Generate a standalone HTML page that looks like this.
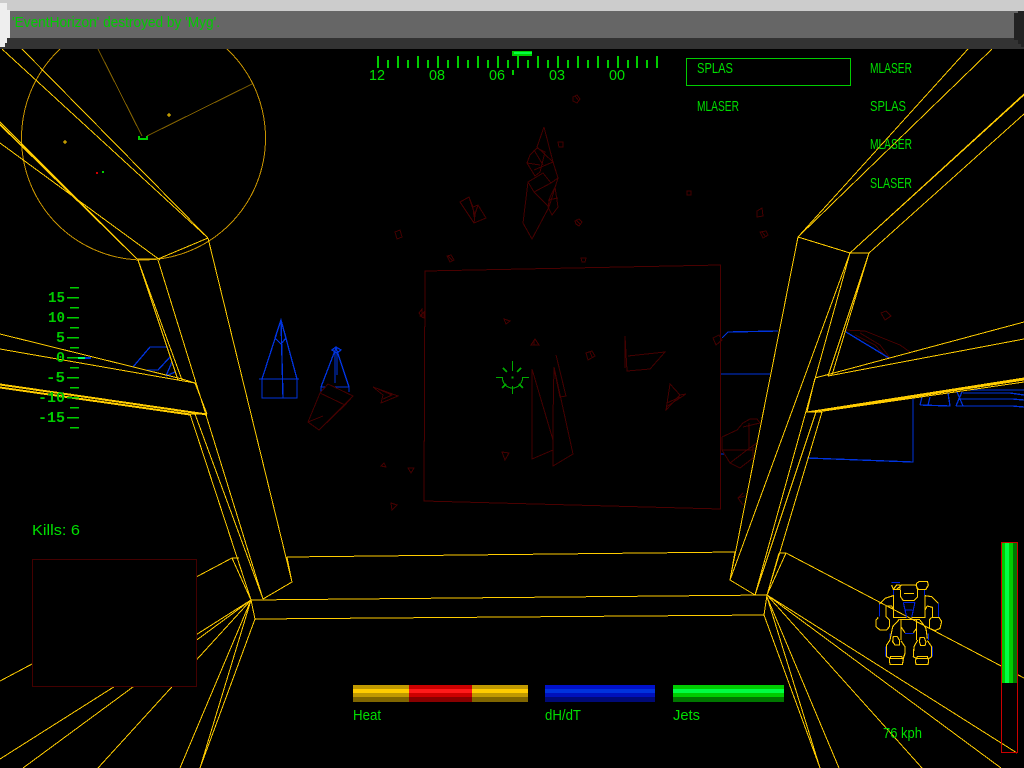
<!DOCTYPE html>
<html><head><meta charset="utf-8"><style>
html,body{margin:0;padding:0;background:#000;width:1024px;height:768px;overflow:hidden}
svg{display:block;position:absolute;left:0;top:0}
text{font-family:"Liberation Sans",sans-serif;font-size:15px;fill:#00e000}
.n{font-family:"Liberation Mono",monospace;font-weight:bold;font-size:15px;fill:#00cc00}
</style></head><body>
<svg width="1024" height="768" viewBox="0 0 1024 768" fill="none">
<rect width="1024" height="768" fill="#000"/>
<!-- blue -->
<g stroke="#0033dd" stroke-width="1.3" shape-rendering="crispEdges">
<path d="M281 320L262 379V398H297V379ZM259 379H299M281 320L283 398M262 379H297M275 338L281 320L286 338L281 344Z"/>
<path d="M336 348L321 387M336 348L349 387M321 387H349M321 387V392M349 387V392M332 350L336 347L341 350L337 353ZM335 350V383M337 350V375"/>
<path d="M133 367L150 347H167M147 370H158L170 357M166 376L175 372M172 362L166 376"/>
<path d="M722 338L728 332L778 331M721 374H770M721 454H724M807 458L913 462V398"/>
<path d="M920 405L950 406L948 393M922 397L920 405M930 397L928 405M957 392L963 406M962 392L956 406M963 393H1010L1024 395M958 399H1012L1024 400M956 406H1012L1024 407M970 390H1024"/>
</g>
<!-- red wreckage -->
<g stroke="#440000" stroke-width="1" shape-rendering="crispEdges">
<path d="M425 271L720.7 265V509L424 501Z" stroke="#4a0000"/>
<path d="M544 127L537 147M544 127L553 162L558 178L551 183L543 173L528 182L523 223L532 239L549 207L534 192L528 182M534 192L551 183M549 207L558 178M523 223L528 182M537 147L553 162L534 170M530 155L537 148L545 152L540 172L535 176L527 163ZM527 163L540 165M534 150L543 165M555 187L558 207L552 215L548 207L550 197ZM548 200L558 198"/>
<path d="M460 202L469 197L473 207L478 205L486 218L474 223ZM469 197L475 215L474 223M473 207L474 217L478 205"/>
<path d="M532 369L553 440V450L532 459ZM554 367L573 454L553 466V417ZM556 355L566 396L560 397L555 373M625 336L627 371L650 369L665 352L628 356M625 336V368M670 384L680 395L666 410ZM686 394L666 407M680 395L686 394M667 403L680 397"/>
<path d="M373 387L398 396L381 403L383 395ZM378 389L392 395L383 399"/>
<path d="M328 384L353 396L319 430L308 422L320 393ZM320 393L345 405L319 430M328 384L320 393M353 396L345 405M323 416L308 422" fill="#000"/>
<path d="M573 97L577 95L580 99L577 103L573 101ZM575 96L579 101M558 142L563 142L563 147L559 147ZM575 221L579 219L582 222L579 226L576 224ZM576 220L581 225M581 258L586 258L585 262L582 262ZM395 232L400 230L402 237L397 239ZM447 256L451 255L454 260L450 262ZM448 256L453 261M687 191L691 191L691 195L687 195ZM757 211L762 208L763 216L757 217ZM760 232L766 231L768 235L763 238ZM762 232L766 237M381 466L384 463L386 467ZM408 468L414 468L411 473ZM391 503L397 505L392 510ZM419 313L422 309V317ZM424 312V318L420 316ZM504 319L510 321L506 324ZM531 345L535 339L539 345ZM534 341V345M586 353L592 351L595 356L588 360ZM590 352L592 357M713 338L719 335L722 340L716 345ZM502 452L509 453L505 460ZM881 313L886 311L891 316L885 320Z"/>
<path d="M722 437L737 430L743 423L750 419H757L760 423L743 427M749 423V450M722 437V450H753M722 450L730 463L740 468L753 458V447M730 463L747 450L757 443M743 493L738 498L743 505M738 498L745 496"/>
<path d="M845 330L865 331L900 345L910 352M860 333L880 345L890 358M855 335L875 345L887 358"/>
</g>
<path d="M846 332L889 358" stroke="#0033dd" stroke-width="1.3" shape-rendering="crispEdges"/>
<!-- radar -->
<g shape-rendering="crispEdges">
<circle cx="143.5" cy="138" r="122" stroke="#c89400" stroke-width="1"/>
<path d="M142 136L98 49M147 136L252 84" stroke="#806000" stroke-width="1"/>
<path d="M139 136V139H147V136" stroke="#00cc00" stroke-width="2"/>
<path d="M167 115H171M169 113V117M63 142H67M65 140V144" stroke="#ffcc00"/>
</g>
<rect x="96" y="172" width="2" height="2" fill="#cc0000"/><rect x="102" y="171" width="2" height="2" fill="#00cc00"/>
<!-- cockpit frame -->
<g stroke="#ffcc00" stroke-width="1" shape-rendering="crispEdges">
<path d="M2 49L208 238M22 49L208 238M0 122L137 259M0 125L137 259M0 124L137 259M0 143L160 260M137 259H158L208 238"/>
<path d="M138 260L178 380M138 260L182 380M158 260L263 599M208 238L292 582L263 599M190 414L251 600M195 414L263 599"/>
<path d="M0 334L182 379L195 383L207 414M0 349L195 383M0 384L207 414M0 387L190 414M0 388L190 415M0 385L207 415M190 414H207"/>
<path d="M287 557L735 552M251 600L767 595M255 619L764 615M251 600L255 619M767 595L764 615M287 557L292 582M735 552L730 580L755 595"/>
<path d="M239 558H232L0 681M232 558L251 600M251 600L0 759M251 600L23 768M251 600L98 768M251 600L180 768M251 600L200 768M255 619L200 768"/>
<path d="M798 237L968 49M798 237L992 49M798 237L850 253H869M850 253L1024 94M850 253L1024 95M869 253L1024 114"/>
<path d="M798 237L730 580M850 253L730 580M850 253L755 595M869 253L828 376M869 253L832 375M816 412L755 595M822 412L767 595M815 378L807 412H822"/>
<path d="M815 378L1024 322M828 376L1024 339M807 412L1024 378M817 412L1024 382M822 411L1024 380M810 412L1024 379"/>
<path d="M779 553H786L767 595M779 553L767 595M786 553L1024 678M767 595L1017 753M767 595L1001 768M767 595L922 768M767 597L839 768M767 597L820 768M764 615L820 768"/>
</g>
<!-- bottom-left box -->
<rect x="32.5" y="559.5" width="164" height="127" fill="#000" stroke="#440000" shape-rendering="crispEdges"/>
<!-- mech -->
<g transform="translate(840 530) scale(.3333)" stroke-width="3.4" shape-rendering="crispEdges">
<path stroke="#0022dd" d="M155 157H180M190 217H225M190 217L200 262M225 217L215 262M197 240H218M118 222V260M295 220V262M137 350V380M277 350V380M150 310V330M265 310V330M195 310H220M160 178V197M253 178V197"/>
<path stroke="#ffcc00" d="M155 165L160 178H180V165H170L160 178M230 160L238 154H262L265 165L258 178H235L230 170ZM170 178L185 165H228L233 180V200L222 212H190L182 200V180M192 190H222M118 222L135 205L160 197V262H200M115 262L108 270V290L120 300H140L148 290V270L138 260V228H155L160 238M255 197L275 200L295 220M275 262L268 270V295L285 302L300 295L305 275L297 262H277V232L262 228L255 240V262M255 197V262H215M178 268H240M178 268L158 290L150 330M183 270V330M183 290L195 308M220 308L230 295M230 270V330M240 270L258 295L262 325M160 320H172L178 330V345H165L158 335ZM150 330L140 345V380L150 385H190L195 370V350L183 332M152 380H185L190 390L187 403H150L148 390ZM240 322H252L258 335L255 347H242L238 335ZM233 330L222 350L220 380L228 385H268L275 380V350L262 332M232 380H262L266 392L264 403H228L226 392Z"/>
</g>
<!-- compass -->
<path d="M378 56V68M398 56V68M418 56V68M438 56V68M458 56V68M478 56V68M498 56V68M518 56V68M538 56V68M558 56V68M578 56V68M598 56V68M618 56V68M637 56V68M657 56V68M388 60V68M408 60V68M428 60V68M448 60V68M468 60V68M488 60V68M508 60V68M528 60V68M548 60V68M568 60V68M588 60V68M608 60V68M628 60V68M647 60V68" stroke="#00cc00" stroke-width="2" shape-rendering="crispEdges"/>
<rect x="512" y="51" width="20" height="5" fill="#00cc00"/><rect x="514" y="52" width="18" height="2" fill="#00ff44"/>
<rect x="512" y="70" width="2" height="5" fill="#00cc00"/>
<text x="369" y="80" textLength="16" lengthAdjust="spacingAndGlyphs">12</text>
<text x="429" y="80" textLength="16" lengthAdjust="spacingAndGlyphs">08</text>
<text x="489" y="80" textLength="16" lengthAdjust="spacingAndGlyphs">06</text>
<text x="549" y="80" textLength="16" lengthAdjust="spacingAndGlyphs">03</text>
<text x="609" y="80" textLength="16" lengthAdjust="spacingAndGlyphs">00</text>
<!-- weapons -->
<rect x="686.5" y="58.5" width="164" height="27" stroke="#00cc00" shape-rendering="crispEdges"/>
<text x="697" y="73" textLength="36" lengthAdjust="spacingAndGlyphs">SPLAS</text>
<text x="697" y="111" textLength="42" lengthAdjust="spacingAndGlyphs">MLASER</text>
<text x="870" y="73" textLength="42" lengthAdjust="spacingAndGlyphs">MLASER</text>
<text x="870" y="111" textLength="36" lengthAdjust="spacingAndGlyphs">SPLAS</text>
<text x="870" y="149" textLength="42" lengthAdjust="spacingAndGlyphs">MLASER</text>
<text x="870" y="188" textLength="42" lengthAdjust="spacingAndGlyphs">SLASER</text>
<!-- pitch ladder -->
<path d="M67 297.5H79M67 317.5H79M67 337.5H79M67 357.5H79M67 377.5H79M67 397.5H79M67 417.5H79M70 287.5H79M70 307.5H79M70 327.5H79M70 347.5H79M70 367.5H79M70 387.5H79M70 407.5H79M70 427.5H79" stroke="#00cc00" stroke-width="1.5" shape-rendering="crispEdges"/>
<rect x="78" y="357" width="7" height="2" fill="#00ff66"/><rect x="85" y="357" width="6" height="2" fill="#0033dd"/>
<text class="n" x="48" y="302" textLength="17" lengthAdjust="spacingAndGlyphs">15</text>
<text class="n" x="48" y="322" textLength="17" lengthAdjust="spacingAndGlyphs">10</text>
<text class="n" x="56" y="342" textLength="9" lengthAdjust="spacingAndGlyphs">5</text>
<text class="n" x="56" y="362" textLength="9" lengthAdjust="spacingAndGlyphs">0</text>
<text class="n" x="46" y="382" textLength="19" lengthAdjust="spacingAndGlyphs">-5</text>
<text class="n" x="38" y="402" textLength="27" lengthAdjust="spacingAndGlyphs">-10</text>
<text class="n" x="38" y="422" textLength="27" lengthAdjust="spacingAndGlyphs">-15</text>
<!-- crosshair -->
<g stroke="#00aa00" shape-rendering="crispEdges">
<path d="M512.5 361V371M496 377.5H503M522 377.5H529M512.5 386V394"/>
<path d="M503 368L507 372M521 368L517 372M502 388L506 384M523 388L519 384" stroke-width="2"/>
<path d="M502.5 378A10 10 0 0 0 522.5 378"/>
<rect x="511.5" y="376.5" width="2" height="2" fill="#00aa00" stroke="none"/>
</g>
<!-- labels -->
<text x="32" y="535" textLength="48" lengthAdjust="spacingAndGlyphs">Kills: 6</text>
<text x="353" y="720" textLength="28" lengthAdjust="spacingAndGlyphs">Heat</text>
<text x="545" y="720" textLength="36" lengthAdjust="spacingAndGlyphs">dH/dT</text>
<text x="673" y="720" textLength="27" lengthAdjust="spacingAndGlyphs">Jets</text>
<text x="883" y="738" textLength="39" lengthAdjust="spacingAndGlyphs">76 kph</text>
<!-- bars -->
<g shape-rendering="crispEdges">
<rect x="353" y="685" width="175" height="4" fill="#c09900"/><rect x="353" y="689" width="175" height="4" fill="#ffcc00"/><rect x="353" y="693" width="175" height="4" fill="#c09900"/><rect x="353" y="697" width="175" height="5" fill="#806600"/>
<rect x="409" y="685" width="63" height="4" fill="#cc0000"/><rect x="409" y="689" width="63" height="4" fill="#ff1a1a"/><rect x="409" y="693" width="63" height="4" fill="#cc0000"/><rect x="409" y="697" width="63" height="5" fill="#880000"/>
<rect x="545" y="685" width="110" height="4" fill="#0011cc"/><rect x="545" y="689" width="110" height="4" fill="#0033dd"/><rect x="545" y="693" width="110" height="4" fill="#0011bb"/><rect x="545" y="697" width="110" height="5" fill="#000a77"/>
<rect x="673" y="685" width="111" height="4" fill="#00cc00"/><rect x="673" y="689" width="111" height="4" fill="#00ff44"/><rect x="673" y="693" width="111" height="4" fill="#00cc00"/><rect x="673" y="697" width="111" height="5" fill="#007700"/>
<rect x="1002" y="543" width="3" height="140" fill="#00cc00"/><rect x="1005" y="543" width="4" height="140" fill="#00ff44"/><rect x="1009" y="543" width="4" height="140" fill="#00cc00"/><rect x="1013" y="543" width="4" height="140" fill="#007700"/>
<rect x="1001.5" y="542.5" width="16" height="210" stroke="#cc0000"/>
<!-- title bar -->
<rect x="0" y="0" width="1024" height="11" fill="#cccccc"/>
<rect x="0" y="11" width="1024" height="27" fill="#666666"/>
<rect x="0" y="38" width="1024" height="11" fill="#333333"/>
<path d="M0 3H7V10H10V38H7V43H5V47H0Z" fill="#eeeeee"/>
<path d="M1024 11H1018V13H1014V40H1018V44H1021V47H1024Z" fill="#222222"/>
</g>
<text x="12" y="27" textLength="208" lengthAdjust="spacingAndGlyphs" style="fill:#00cc00">'EventHorizon' destroyed by 'Myg'.</text>
</svg>
</body></html>
